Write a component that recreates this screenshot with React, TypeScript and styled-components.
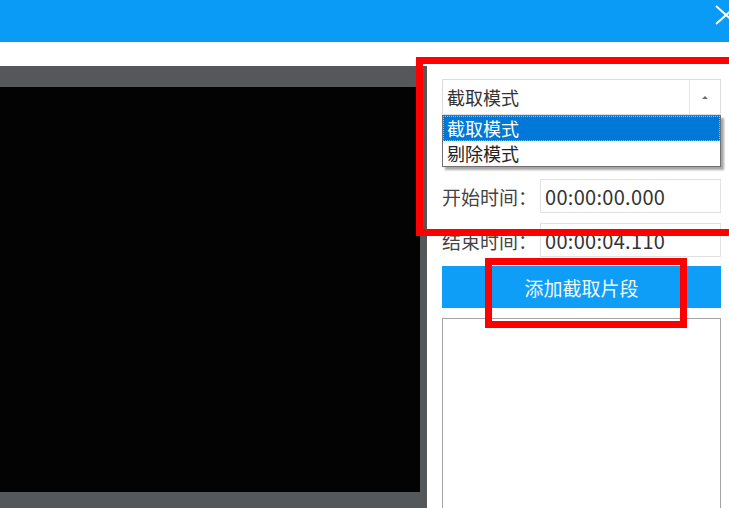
import React from "react";
import styled, { createGlobalStyle } from "styled-components";

const GlobalStyle = createGlobalStyle`
  html, body {
    margin: 0;
    padding: 0;
    background: #ffffff;
  }
  body {
    font-family: "Noto Sans CJK SC", "Noto Sans", sans-serif;
    color: #333333;
  }
`;

const Window = styled.div`
  position: relative;
  width: 729px;
  height: 508px;
  overflow: hidden;
  display: flex;
  flex-direction: column;
  background: #ffffff;
`;

const TitleBar = styled.div`
  height: 42px;
  flex-shrink: 0;
  background: #0a9bf6;
  display: flex;
  justify-content: flex-end;
  align-items: flex-start;
`;

const CloseIcon = styled.svg`
  margin-top: 5px;
  margin-right: -8px;
  flex-shrink: 0;
`;

const Body = styled.div`
  flex: 1;
  display: flex;
  min-height: 0;
`;

const PlayerPanel = styled.div`
  width: 427px;
  margin-top: 24px;
  background: #54585b;
  padding: 21px 7px 16px 0;
  box-sizing: border-box;
  display: flex;
`;

const Screen = styled.div`
  flex: 1;
  background: #030303;
`;

const SidePanel = styled.div`
  width: 279px;
  margin-left: 15px;
  display: flex;
  flex-direction: column;
  & > * {
    flex-shrink: 0;
  }
`;

const Combo = styled.div`
  position: relative;
  margin-top: 37px;
  height: 36px;
  border: 1px solid #dcdcdc;
  box-sizing: border-box;
  display: flex;
  align-items: center;
`;

const ComboText = styled.div`
  flex: 1;
  padding-left: 4px;
  font-size: 18px;
  color: #333333;
`;

const ComboArrow = styled.div`
  width: 30px;
  height: 100%;
  border-left: 1px solid #e6e6e6;
  display: flex;
  align-items: center;
  justify-content: center;
  &::after {
    content: "";
    border-left: 3px solid transparent;
    border-right: 3px solid transparent;
    border-bottom: 3px solid #6b6b6b;
  }
`;

const DropList = styled.div`
  position: absolute;
  left: -1px;
  right: -1px;
  top: 35px;
  background: #ffffff;
  border: 1px solid #6f6f6f;
  box-shadow: 3px 3px 2px rgba(0, 0, 0, 0.35);
  z-index: 2;
`;

const DropItem = styled.div<{ selected?: boolean }>`
  height: 25px;
  line-height: 25px;
  padding-left: 4px;
  font-size: 18px;
  background: ${(p) => (p.selected ? "#0078d7" : "#ffffff")};
  color: ${(p) => (p.selected ? "#ffffff" : "#222222")};
  outline: ${(p) => (p.selected ? "1px dotted #9fb9d8" : "none")};
  outline-offset: -1px;
`;

const FieldRow = styled.div<{ gap: number }>`
  margin-top: ${(p) => p.gap}px;
  height: 34px;
  display: flex;
  align-items: center;
`;

const Label = styled.div`
  width: 98px;
  font-size: 19px;
  color: #444444;
  white-space: nowrap;
`;

const TimeInput = styled.div`
  flex: 1;
  height: 100%;
  border: 1px solid #e2e2e2;
  box-sizing: border-box;
  padding-left: 4px;
  display: flex;
  align-items: center;
  font-size: 20px;
  color: #333333;
  letter-spacing: 0.3px;
`;

const AddButton = styled.div`
  margin-top: 9px;
  height: 42px;
  background: #0e9ef8;
  color: #f4f9ff;
  font-size: 19px;
  display: flex;
  align-items: center;
  justify-content: center;
`;

const ClipList = styled.div`
  margin-top: 10px;
  height: 240px;
  border: 1px solid #a4a4a4;
  box-sizing: border-box;
  background: #ffffff;
`;

const Marker = styled.div<{ x: number; y: number; w: number; h: number }>`
  position: absolute;
  left: ${(p) => p.x}px;
  top: ${(p) => p.y}px;
  width: ${(p) => p.w}px;
  height: ${(p) => p.h}px;
  border: 7px solid #ff0000;
  box-sizing: border-box;
  pointer-events: none;
  z-index: 5;
`;

export default function App() {
  return (
    <>
      <GlobalStyle />
      <Window>
        <TitleBar>
          <CloseIcon width="22" height="20" viewBox="0 0 22 20">
            <path
              d="M1 1 L21 19 M21 1 L1 19"
              stroke="#ffffff"
              strokeWidth="2"
              fill="none"
            />
          </CloseIcon>
        </TitleBar>
        <Body>
          <PlayerPanel>
            <Screen />
          </PlayerPanel>
          <SidePanel>
            <Combo>
              <ComboText>截取模式</ComboText>
              <ComboArrow />
              <DropList>
                <DropItem selected>截取模式</DropItem>
                <DropItem>剔除模式</DropItem>
              </DropList>
            </Combo>
            <FieldRow gap={64}>
              <Label>开始时间：</Label>
              <TimeInput>00:00:00.000</TimeInput>
            </FieldRow>
            <FieldRow gap={10}>
              <Label>结束时间：</Label>
              <TimeInput>00:00:04.110</TimeInput>
            </FieldRow>
            <AddButton>添加截取片段</AddButton>
            <ClipList />
          </SidePanel>
        </Body>
        <Marker x={416} y={57} w={330} h={179} />
        <Marker x={485} y={258} w={202} h={70} />
      </Window>
    </>
  );
}
